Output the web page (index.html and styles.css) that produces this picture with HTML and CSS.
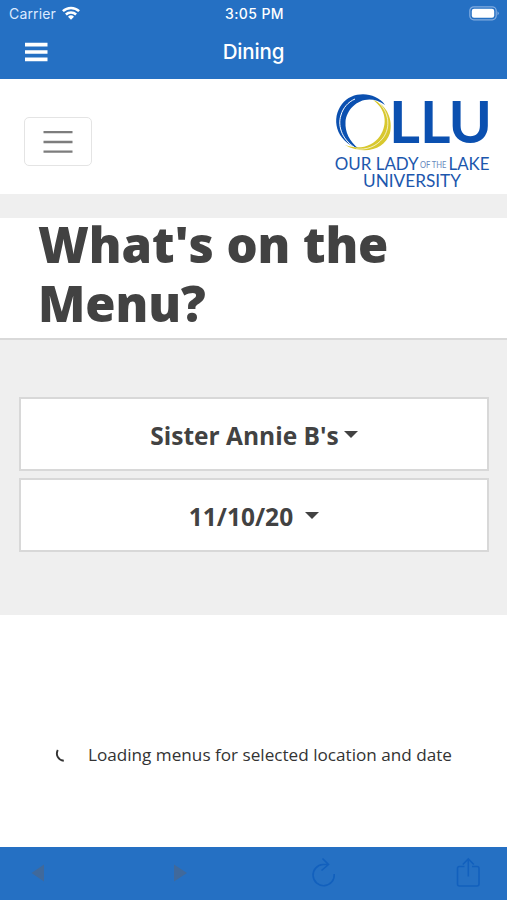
FILE: index.html
```html
<!DOCTYPE html>
<html lang="en">
<head>
<meta charset="utf-8">
<title>Dining</title>
<link rel="stylesheet" href="styles.css">
</head>
<body>
<header class="top">
  <div class="status">
    <div class="carrier"><span>Carrier</span>
      <svg class="wifi" width="18" height="14" viewBox="0 0 18 14" fill="none" stroke="#fff" stroke-width="2.5"><path d="M.9 5.2a11.7 11.7 0 0 1 16.2 0M3.9 8.5a7.3 7.3 0 0 1 10.2 0"/><path d="M6 10.7a4.3 4.3 0 0 1 6 0L9 13.8z" fill="#fff" stroke="none"/></svg>
    </div>
    <div class="time">3:05 PM</div>
    <svg class="battery" width="31" height="15" viewBox="0 0 31 15"><rect x=".8" y=".8" width="26.4" height="13" rx="4" fill="none" stroke="#82ace0" stroke-width="1.2"/><rect x="2.8" y="2.8" width="22.4" height="9" rx="2.2" fill="#fff"/><path d="M28.5 5.2q2.6 2 0 4.2z" fill="#82ace0"/></svg>
  </div>
  <div class="nav">
    <svg class="menu" width="23" height="20" viewBox="0 0 23 20" fill="#fff"><path d="M0 .8h22.5v3.6H0zM0 8.2h22.5v3.6H0zM0 15.6h22.5v3.6H0z"/></svg>
    <div class="title">Dining</div>
  </div>
</header>
<main class="page">
  <div class="brand">
    <button class="toggler" aria-label="Toggle navigation"><svg width="30" height="24" viewBox="0 0 30 24" stroke="#7d7d7d" stroke-width="2.3"><path d="M.5 2.2h29M.5 12h29M.5 21.7h29"/></svg></button>
    <svg class="logo" width="156" height="96" viewBox="334 94 156 96">
      <path fill="#0b50b0" d="M385 105C375 91 352 91 342 104C331 118 335 141 359 149C349 141 345 132 345.500 122C346.500 106 366 91 385 105Z"/>
      <path fill="none" stroke="#fff" stroke-width="1" d="M357 149C343 141 337 127 341 115C343 108 348 102 355 99"/>
      <path fill="#d8c82e" d="M373 100C388 105 393 121 390 133C385 149 365 156 345 145C359 150 372 147 380 136C388 124 386 109 373 100Z"/>
      <path fill="none" stroke="#fff" stroke-width=".7" d="M378 102C389 112 391 127 383 138C376 147 366 150 356 149"/>
      <g class="logo-big"><text x="389" y="143" textLength="31" lengthAdjust="spacingAndGlyphs">L</text><text x="420" y="143" textLength="30.500" lengthAdjust="spacingAndGlyphs">L</text><text x="448.500" y="143" textLength="43.500" lengthAdjust="spacingAndGlyphs">U</text></g>
      <g class="logo-name"><text x="334.700" y="170" textLength="84" lengthAdjust="spacingAndGlyphs">OUR LADY</text><text x="448.500" y="170" textLength="41" lengthAdjust="spacingAndGlyphs">LAKE</text><text x="363" y="187.300" textLength="98" lengthAdjust="spacingAndGlyphs">UNIVERSITY</text></g>
      <text class="logo-small" x="420" y="168" textLength="26.500" lengthAdjust="spacingAndGlyphs">OF THE</text>
    </svg>
  </div>
  <div class="heading"><h1>What's on the<br>Menu?</h1></div>
  <section class="filters">
    <button class="select"><span class="place">Sister Annie B's</span><i class="caret"></i></button>
    <button class="select"><span class="date">11/10/20</span><i class="caret caret-date"></i></button>
  </section>
  <div class="loading">
    <svg width="12" height="14" viewBox="0 0 12 14" fill="none" stroke="#333" stroke-width="1.9"><path d="M2.800 2C.4 6.500 3 12.200 8.800 12.800"/></svg>
    <span>Loading menus for selected location and date</span>
  </div>
</main>
<footer class="toolbar">
  <svg width="507" height="53" viewBox="0 847 507 53" fill="none" stroke="#1260bd" stroke-width="1.6">
    <path d="M44 864.5v17L31.5 873zM174 864.5v17L187 873z" fill="#40699b" stroke="none"/>
    <path d="M328.500 864.500H323a10.600 10.600 0 1 0 11.200 9.500M322.500 858.500l6 6-7 6"/>
    <path d="M464.500 866.500h-5a2 2 0 0 0-2 2v15.500a2 2 0 0 0 2 2h17.500a2 2 0 0 0 2-2v-15.500a2 2 0 0 0-2-2h-5M468.300 876.500V859M462.800 864.500l5.500-5.500 5.500 5.500"/>
  </svg>
</footer>
</body>
</html>
```
FILE: styles.css
```css
* { box-sizing: border-box; }
body { margin: 0; width: 507px; height: 900px; display: flex; flex-direction: column; overflow: hidden; background: #fff; color: #424242; font-family: "Open Sans", sans-serif; }
svg { display: block; flex: none; }
button { margin: 0; font: inherit; color: inherit; background: #fff; }
.top { height: 79px; flex: none; background: #2570c3; color: #fff; font-family: Inter, sans-serif; }
.status { height: 27px; padding: 0 7px 0 9px; display: grid; grid-template-columns: 1fr auto 1fr; align-items: center; font-size: 14px; line-height: 27px; }
.carrier { display: flex; align-items: center; gap: 6px; color: #dceaff; letter-spacing: .15px; }
.wifi { margin-top: -2px; }
.time { font-weight: 500; letter-spacing: .4px; }
.battery { justify-self: end; }
.nav { height: 50px; padding: 0 25px; display: grid; grid-template-columns: 1fr auto 1fr; align-items: center; }
.title { font-size: 20.500px; line-height: 50px; font-weight: 500; letter-spacing: -.15px; }
.page { flex: 1; min-height: 0; }
.brand { height: 115px; padding: 15px 17px 0 24px; display: flex; justify-content: space-between; }
.toggler { width: 68px; height: 49px; margin-top: 23px; padding: 0; display: flex; align-items: center; justify-content: center; border: 1px solid #e4e4e4; border-radius: 5px; }
.logo { overflow: visible; }
.logo-big { font: 700 58px Lato, sans-serif; fill: #0b50b0; }
.logo-name { font: 400 18px Lato, sans-serif; fill: #1c57ad; }
.logo-small { font: 400 8.500px Lato, sans-serif; fill: #6688bd; }
.heading { height: 146px; padding-left: 38px; border-top: 24px solid #efefef; border-bottom: 2px solid #d9d9d9; }
h1 { margin: -3px 0 0; font-size: 49px; line-height: 58.500px; font-weight: 800; letter-spacing: -.1px; }
.filters { height: 275px; padding: 57px 18px 0 19px; display: flex; flex-direction: column; gap: 7px; background: #efefef; }
.select { height: 74px; padding: 2px 0 0; display: flex; align-items: center; justify-content: center; border: 2px solid #d8d8d8; font-size: 24.500px; font-weight: 700; }
.caret { margin: 0 0 2px 5px; border: 7px solid transparent; border-top-color: #424242; border-bottom: 0; }
.caret-date { margin-left: 12px; }
.loading { padding: 127px 0 0 55px; display: flex; align-items: center; gap: 21px; font-size: 17.150px; line-height: 26px; color: #333; }
.toolbar { height: 53px; flex: none; background: #2570c3; }
```
